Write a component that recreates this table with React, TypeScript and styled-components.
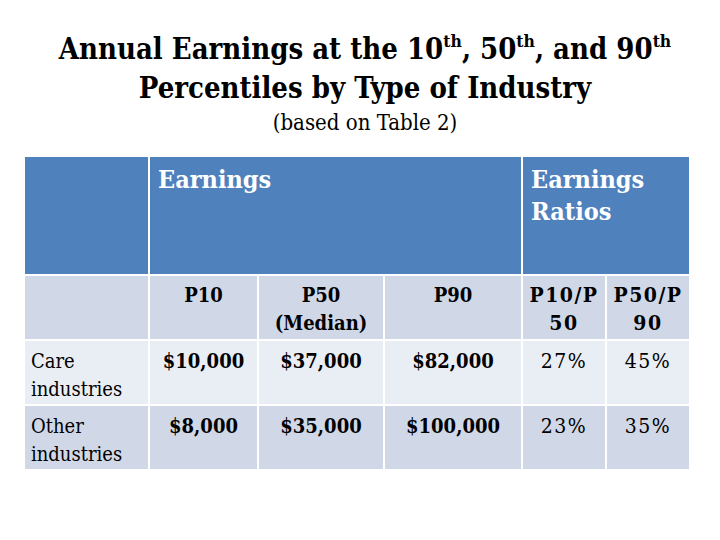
import React from "react";
import styled, { createGlobalStyle } from "styled-components";

const GlobalStyle = createGlobalStyle`
  html, body {
    margin: 0;
    padding: 0;
    background: #ffffff;
  }
  body {
    width: 720px;
    height: 540px;
    overflow: hidden;
    font-family: "DejaVu Serif Condensed", "DejaVu Serif", "Liberation Serif", serif;
    color: #000000;
  }
`;

const Slide = styled.div`
  width: 720px;
  height: 540px;
  display: flex;
  flex-direction: column;
  align-items: flex-start;
`;

const TitleBlock = styled.header`
  width: 720px;
  padding: 30px 0 0 10px;
  box-sizing: border-box;
  text-align: center;
`;

const Title = styled.h1`
  margin: 0;
  font-size: 29px;
  line-height: 39px;
  font-weight: 700;
`;

const Sup = styled.sup`
  font-size: 0.6em;
  line-height: 0;
  vertical-align: 0.7em;
`;

const Subtitle = styled.p`
  margin: 2px 0 0;
  font-size: 22px;
  line-height: 26px;
  font-weight: 400;
`;

const Table = styled.div`
  margin: 21px 0 0 25px;
  display: grid;
  grid-template-columns: 123px 107px 124px 136px 82px 82px;
  grid-template-rows: 117px 63px 63px 63px;
  gap: 2px;
`;

type Tone = "head" | "sub" | "light" | "dark";

const tones: Record<Tone, string> = {
  head: "#4f81bd",
  sub: "#d0d8e8",
  light: "#e9edf4",
  dark: "#d0d8e8",
};

const Cell = styled.div<{
  $tone: Tone;
  $span?: number;
  $center?: boolean;
  $bold?: boolean;
  $wide?: boolean;
}>`
  grid-column: span ${(p) => p.$span ?? 1};
  background: ${(p) => tones[p.$tone]};
  color: ${(p) => (p.$tone === "head" ? "#ffffff" : "#000000")};
  font-size: ${(p) => (p.$tone === "head" ? "25px" : p.$wide ? "21px" : "20px")};
  line-height: ${(p) => (p.$tone === "head" ? "32px" : "28px")};
  font-weight: ${(p) => (p.$bold ? 700 : 400)};
  letter-spacing: ${(p) => (p.$wide ? "1.5px" : "normal")};
  text-align: ${(p) => (p.$center ? "center" : "left")};
  padding: ${(p) => (p.$tone === "head" ? "7px 8px" : p.$tone === "sub" ? "5px 6px" : "6px 6px")};
  box-sizing: border-box;
  overflow: hidden;
`;

const rows = [
  { name: "Care industries", tone: "light" as Tone, p10: "$10,000", p50: "$37,000", p90: "$82,000", r1: "27%", r2: "45%" },
  { name: "Other industries", tone: "dark" as Tone, p10: "$8,000", p50: "$35,000", p90: "$100,000", r1: "23%", r2: "35%" },
];

export default function App() {
  return (
    <Slide>
      <GlobalStyle />
      <TitleBlock>
        <Title>
          Annual Earnings at the 10<Sup>th</Sup>, 50<Sup>th</Sup>, and 90<Sup>th</Sup>
          <br />
          Percentiles by Type of Industry
        </Title>
        <Subtitle>(based on Table 2)</Subtitle>
      </TitleBlock>

      <Table>
        <Cell $tone="head" />
        <Cell $tone="head" $span={3} $bold>
          Earnings
        </Cell>
        <Cell $tone="head" $span={2} $bold>
          Earnings Ratios
        </Cell>

        <Cell $tone="sub" />
        <Cell $tone="sub" $center $bold>P10</Cell>
        <Cell $tone="sub" $center $bold>P50 (Median)</Cell>
        <Cell $tone="sub" $center $bold>P90</Cell>
        <Cell $tone="sub" $center $bold $wide>P10/P 50</Cell>
        <Cell $tone="sub" $center $bold $wide>P50/P 90</Cell>

        {rows.map((r) => (
          <React.Fragment key={r.name}>
            <Cell $tone={r.tone}>{r.name}</Cell>
            <Cell $tone={r.tone} $center $bold>{r.p10}</Cell>
            <Cell $tone={r.tone} $center $bold>{r.p50}</Cell>
            <Cell $tone={r.tone} $center $bold>{r.p90}</Cell>
            <Cell $tone={r.tone} $center $wide>{r.r1}</Cell>
            <Cell $tone={r.tone} $center $wide>{r.r2}</Cell>
          </React.Fragment>
        ))}
      </Table>
    </Slide>
  );
}
